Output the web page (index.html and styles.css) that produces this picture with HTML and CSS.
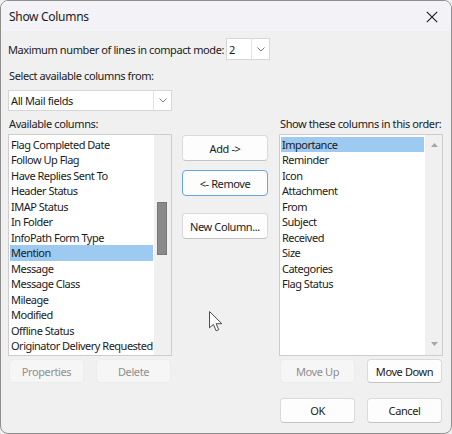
FILE: index.html
```html
<!DOCTYPE html>
<html lang="en">
<head>
<meta charset="utf-8">
<title>Show Columns</title>
<link rel="stylesheet" href="styles.css">
</head>
<body>
<div class="window">
  <div class="titlebar">
    <span class="title">Show Columns</span>
    <svg class="close" width="12" height="12" viewBox="0 0 12 12"><path d="M0.8 0.8 L11.2 11.2 M11.2 0.8 L0.8 11.2" stroke="#1a1a1a" stroke-width="1.1" fill="none"/></svg>
  </div>
  <div class="content">
    <div class="row-lines">
      <span class="lines-label">Maximum number of lines in compact mode:</span>
      <div class="select small">
        <span class="val">2</span>
        <span class="drop"><svg width="8" height="5" viewBox="0 0 8 5"><path d="M0.5 0.5 L4 4 L7.5 0.5" fill="none" stroke="#707070" stroke-width="0.9"/></svg></span>
      </div>
    </div>
    <div class="from-label">Select available columns from:</div>
    <div class="select big">
      <span class="val">All Mail fields</span>
      <span class="drop"><svg width="8" height="5" viewBox="0 0 8 5"><path d="M0.5 0.5 L4 4 L7.5 0.5" fill="none" stroke="#707070" stroke-width="0.9"/></svg></span>
    </div>

    <div class="columns">
      <div class="col side">
        <div class="caption">Available columns:</div>
        <div class="listbox">
          <div class="items">
            <div class="item">Flag Completed Date</div>
            <div class="item">Follow Up Flag</div>
            <div class="item">Have Replies Sent To</div>
            <div class="item">Header Status</div>
            <div class="item">IMAP Status</div>
            <div class="item">In Folder</div>
            <div class="item">InfoPath Form Type</div>
            <div class="item selected">Mention</div>
            <div class="item">Message</div>
            <div class="item">Message Class</div>
            <div class="item">Mileage</div>
            <div class="item">Modified</div>
            <div class="item">Offline Status</div>
            <div class="item">Originator Delivery Requested</div>
          </div>
          <div class="scroll">
            <div class="thumb"></div>
          </div>
        </div>
        <div class="btnrow">
          <button class="btn small disabled">Properties</button>
          <button class="btn small disabled">Delete</button>
        </div>
      </div>

      <div class="col mid">
        <button class="btn wide add">Add -&gt;</button>
        <button class="btn wide focus remove">&lt;- Remove</button>
        <button class="btn wide">New Column...</button>
      </div>

      <div class="col side">
        <div class="caption">Show these columns in this order:</div>
        <div class="listbox">
          <div class="items">
            <div class="item selected">Importance</div>
            <div class="item">Reminder</div>
            <div class="item">Icon</div>
            <div class="item">Attachment</div>
            <div class="item">From</div>
            <div class="item">Subject</div>
            <div class="item">Received</div>
            <div class="item">Size</div>
            <div class="item">Categories</div>
            <div class="item">Flag Status</div>
          </div>
          <div class="scroll arrows">
            <svg width="7" height="4" viewBox="0 0 7 4"><path d="M0 4 L3.5 0 L7 4 Z" fill="#a6a6a6"/></svg>
            <svg width="7" height="4" viewBox="0 0 7 4"><path d="M0 0 L3.5 4 L7 0 Z" fill="#a6a6a6"/></svg>
          </div>
        </div>
        <div class="btnrow">
          <button class="btn small disabled">Move Up</button>
          <button class="btn small">Move Down</button>
        </div>
      </div>
    </div>

    <div class="footer">
      <button class="btn small">OK</button>
      <button class="btn small">Cancel</button>
    </div>
  </div>

  <svg class="cursor" width="14" height="21" viewBox="0 0 14 21"><path d="M0.5 0.5 L0.5 16.8 L4.4 13.4 L7.1 19.8 L9.7 18.7 L7.1 12.7 L12.8 12.7 Z" fill="#ffffff" stroke="#3a3a3a" stroke-width="0.9" stroke-linejoin="round"/></svg>
</div>
</body>
</html>
```
FILE: styles.css
```css
* { box-sizing: border-box; }

html, body {
  margin: 0;
  background: #f0f0f0;
}

body {
  font-family: "Noto Sans", "Open Sans", sans-serif;
  font-size: 11px;
  letter-spacing: -0.4px;
  color: #1b1b1b;
}

.window {
  position: relative;
  width: 452px;
  height: 434px;
  border: 1px solid #8f8f8f;
  border-radius: 8px;
  overflow: hidden;
  background: #f0f0f0;
  display: flex;
  flex-direction: column;
}

.titlebar {
  flex: none;
  height: 30px;
  padding: 1px 13px 0 8px;
  background: #f3f2f7;
  display: flex;
  align-items: center;
  justify-content: space-between;
}

.title {
  font-size: 12px;
  letter-spacing: -0.3px;
}

.close { display: block; }

.content {
  flex: 1;
  padding: 7px 8px 0 7px;
  display: flex;
  flex-direction: column;
}

.row-lines {
  height: 22px;
  display: flex;
  align-items: center;
}

.lines-label {
  flex: 0 0 218px;
  white-space: nowrap;
}

.select {
  height: 22px;
  background: #ffffff;
  border: 1px solid #d6d6d6;
  display: flex;
  align-items: stretch;
}

.select .val {
  flex: 1;
  display: flex;
  align-items: center;
  padding-left: 2px;
  white-space: nowrap;
}

.select .drop {
  flex: 0 0 18px;
  border-left: 1px solid #e2e2e2;
  display: flex;
  align-items: center;
  justify-content: center;
}

.select.small { width: 44px; }
.select.big {
  width: 164px;
  height: 21px;
  margin-top: 6px;
}

.from-label {
  margin-top: 8px;
  height: 16px;
  line-height: 16px;
  padding-left: 1px;
}

.columns {
  margin-top: 4px;
  display: flex;
  align-items: flex-start;
}

.col.side { width: 164px; }

.col.mid {
  width: 86px;
  margin: 0 11px 0 10px;
  padding-top: 20px;
  display: flex;
  flex-direction: column;
}

.caption {
  height: 17px;
  line-height: 17px;
  margin-bottom: 2px;
  padding-left: 1px;
  white-space: nowrap;
}

.listbox {
  height: 222px;
  border: 1px solid #cdcdcd;
  background: #ffffff;
  display: flex;
  overflow: hidden;
}

.items {
  flex: 1;
  padding: 1.5px 1px 0 1px;
  overflow: hidden;
}

.item {
  height: 15.5px;
  line-height: 15.5px;
  padding-left: 1px;
  letter-spacing: -0.5px;
  white-space: nowrap;
}

.item.selected { background: #9dcaf0; }

.scroll {
  flex: 0 0 17px;
  background: #f0f0f0;
}

.thumb {
  width: 10px;
  height: 53px;
  margin: 67px 0 0 3px;
  background: #8a8a8a;
  border: 1px solid #777777;
}

.scroll.arrows {
  display: flex;
  flex-direction: column;
  align-items: center;
  justify-content: space-between;
  padding: 8px 0 9px 1px;
}

.scroll.arrows svg { display: block; }

.btn {
  font: inherit;
  letter-spacing: inherit;
  color: #1b1b1b;
  background: #fdfdfd;
  border: 1px solid #dadada;
  border-bottom-color: #c4c4c4;
  border-radius: 4px;
  padding: 0;
  display: flex;
  align-items: center;
  justify-content: center;
  white-space: nowrap;
}

.btn.wide {
  width: 86px;
  height: 26px;
}

.btn.add { margin-bottom: 9px; }
.btn.remove { margin-bottom: 17px; }

.btn.focus { border-color: #68a4e0; }

.btn.small {
  width: 75px;
  height: 24px;
}

.btn.disabled {
  background: #f6f6f6;
  border-color: #ececec;
  color: #8f8f8f;
}

.btnrow {
  margin-top: 3px;
  padding: 0 1px;
  display: flex;
  justify-content: space-between;
}

.footer {
  margin-top: 15px;
  padding-right: 1px;
  display: flex;
  justify-content: flex-end;
  gap: 12px;
}

.footer .btn { height: 25px; }

.cursor {
  position: absolute;
  left: 208px;
  top: 310px;
}
```
